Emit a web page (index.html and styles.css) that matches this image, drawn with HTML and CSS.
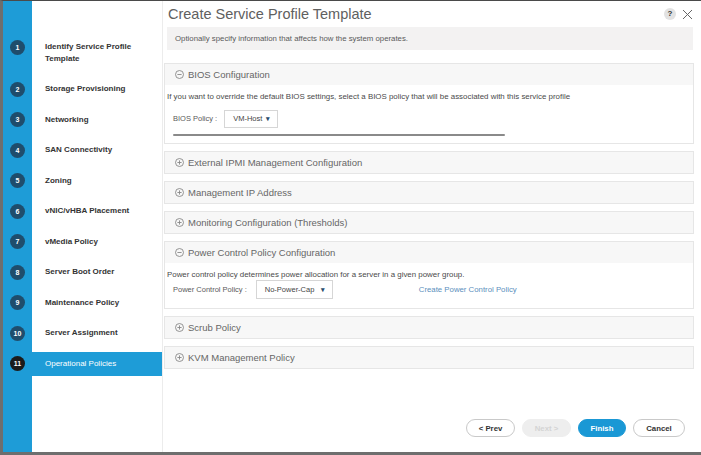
FILE: index.html
```html
<!DOCTYPE html>
<html lang="en">
<head>
  <meta charset="UTF-8">
  <title>Create Service Profile Template</title>
  <link rel="stylesheet" href="styles.css">
</head>
<body>
  <div class="steps">
    <div class="step"><span class="step-num"><i>1</i></span><span class="step-label">Identify Service Profile Template</span></div>
    <div class="step"><span class="step-num"><i>2</i></span><span class="step-label">Storage Provisioning</span></div>
    <div class="step"><span class="step-num"><i>3</i></span><span class="step-label">Networking</span></div>
    <div class="step"><span class="step-num"><i>4</i></span><span class="step-label">SAN Connectivity</span></div>
    <div class="step"><span class="step-num"><i>5</i></span><span class="step-label">Zoning</span></div>
    <div class="step"><span class="step-num"><i>6</i></span><span class="step-label">vNIC/vHBA Placement</span></div>
    <div class="step"><span class="step-num"><i>7</i></span><span class="step-label">vMedia Policy</span></div>
    <div class="step"><span class="step-num"><i>8</i></span><span class="step-label">Server Boot Order</span></div>
    <div class="step"><span class="step-num"><i>9</i></span><span class="step-label">Maintenance Policy</span></div>
    <div class="step"><span class="step-num"><i>10</i></span><span class="step-label">Server Assignment</span></div>
    <div class="step active"><span class="step-num"><i>11</i></span><span class="step-label">Operational Policies</span></div>
  </div>

  <div class="main">
    <div class="title-row">
      <h1>Create Service Profile Template</h1>
      <div class="title-icons">
        <span class="help">?</span>
        <svg class="close" width="11" height="11" viewBox="0 0 11 11"><path d="M1 1L10 10M10 1L1 10" stroke="#666" stroke-width="1" fill="none"/></svg>
      </div>
    </div>
    <div class="desc">Optionally specify information that affects how the system operates.</div>

    <div class="panel bios">
      <div class="panel-head"><svg class="toggle" width="9" height="9" viewBox="0 0 9 9"><circle cx="4.5" cy="4.5" r="4" stroke="#888" stroke-width="0.9" fill="none"/><path d="M2.4 4.5H6.6" stroke="#888" stroke-width="0.9"/></svg>BIOS Configuration</div>
      <div class="panel-body">
        <div class="note">If you want to override the default BIOS settings, select a BIOS policy that will be associated with this service profile</div>
        <div class="field">
          <span class="field-label">BIOS Policy :</span>
          <span class="select bios-select">VM-Host <b>&#9662;</b></span>
        </div>
        <div class="scroll-bar"></div>
      </div>
    </div>

    <div class="panel">
      <div class="panel-head"><svg class="toggle" width="9" height="9" viewBox="0 0 9 9"><circle cx="4.5" cy="4.5" r="4" stroke="#888" stroke-width="0.9" fill="none"/><path d="M2.4 4.5H6.6M4.5 2.4V6.6" stroke="#888" stroke-width="0.9"/></svg>External IPMI Management Configuration</div>
    </div>
    <div class="panel">
      <div class="panel-head"><svg class="toggle" width="9" height="9" viewBox="0 0 9 9"><circle cx="4.5" cy="4.5" r="4" stroke="#888" stroke-width="0.9" fill="none"/><path d="M2.4 4.5H6.6M4.5 2.4V6.6" stroke="#888" stroke-width="0.9"/></svg>Management IP Address</div>
    </div>
    <div class="panel">
      <div class="panel-head"><svg class="toggle" width="9" height="9" viewBox="0 0 9 9"><circle cx="4.5" cy="4.5" r="4" stroke="#888" stroke-width="0.9" fill="none"/><path d="M2.4 4.5H6.6M4.5 2.4V6.6" stroke="#888" stroke-width="0.9"/></svg>Monitoring Configuration (Thresholds)</div>
    </div>

    <div class="panel power">
      <div class="panel-head"><svg class="toggle" width="9" height="9" viewBox="0 0 9 9"><circle cx="4.5" cy="4.5" r="4" stroke="#888" stroke-width="0.9" fill="none"/><path d="M2.4 4.5H6.6" stroke="#888" stroke-width="0.9"/></svg>Power Control Policy Configuration</div>
      <div class="panel-body">
        <div class="note">Power control policy determines power allocation for a server in a given power group.</div>
        <div class="field">
          <span class="field-label">Power Control Policy :</span>
          <span class="select power-select">No-Power-Cap <b>&#9662;</b></span>
          <a class="link" href="#">Create Power Control Policy</a>
        </div>
      </div>
    </div>

    <div class="panel">
      <div class="panel-head"><svg class="toggle" width="9" height="9" viewBox="0 0 9 9"><circle cx="4.5" cy="4.5" r="4" stroke="#888" stroke-width="0.9" fill="none"/><path d="M2.4 4.5H6.6M4.5 2.4V6.6" stroke="#888" stroke-width="0.9"/></svg>Scrub Policy</div>
    </div>
    <div class="panel">
      <div class="panel-head"><svg class="toggle" width="9" height="9" viewBox="0 0 9 9"><circle cx="4.5" cy="4.5" r="4" stroke="#888" stroke-width="0.9" fill="none"/><path d="M2.4 4.5H6.6M4.5 2.4V6.6" stroke="#888" stroke-width="0.9"/></svg>KVM Management Policy</div>
    </div>

    <div class="footer">
      <button class="btn prev">&lt; Prev</button>
      <button class="btn next" disabled>Next &gt;</button>
      <button class="btn finish">Finish</button>
      <button class="btn cancel">Cancel</button>
    </div>
  </div>
</body>
</html>
```

FILE: styles.css
```css
html, body {
  margin: 0;
  height: 100%;
}
body {
  box-sizing: border-box;
  height: 455px;
  display: flex;
  font-family: "Liberation Sans", Arial, sans-serif;
  color: #333;
  background: #fff;
  border-top: 1px solid #4a4a4a;
  border-left: 3px solid #6e6e6e;
  border-bottom: 3px solid #6e6e6e;
}

/* wizard steps */
.steps {
  width: 159px;
  flex: none;
  padding-top: 34px;
  box-sizing: border-box;
  background: linear-gradient(to right, #1e9cd7 29px, #fff 29px);
}
.step {
  display: flex;
  align-items: flex-start;
  margin-bottom: 6.5px;
}
.step-num {
  width: 29px;
  flex: none;
  display: flex;
  justify-content: center;
}
.step-num i {
  width: 15px;
  height: 15px;
  margin-top: 4.5px;
  border-radius: 50%;
  background: #1f4d6c;
  color: #fff;
  font-style: normal;
  font-weight: bold;
  font-size: 7px;
  line-height: 15px;
  text-align: center;
}
.step-label {
  flex: 1;
  padding: 6.25px 8px 6.25px 13px;
  font-size: 8px;
  font-weight: bold;
  line-height: 11.5px;
  color: #333;
}
.step.active .step-label {
  background: #1e9cd7;
  color: #fff;
  font-weight: normal;
}
.step.active .step-num i {
  background: #1b1b1b;
}

/* main area */
.main {
  flex: 1;
  display: flex;
  flex-direction: column;
  border-left: 1px solid #ececec;
  padding: 0 7px 0 1px;
}
.title-row {
  height: 26px;
  display: flex;
  align-items: center;
  justify-content: space-between;
  margin-left: 4px;
}
h1 {
  margin: 0;
  font-size: 14.5px;
  font-weight: normal;
  color: #606060;
}
.title-icons {
  display: flex;
  align-items: center;
  gap: 6px;
  margin-right: 1px;
}
.help {
  width: 12px;
  height: 12px;
  border-radius: 50%;
  background: #e2e2e2;
  font-size: 8px;
  font-weight: bold;
  line-height: 12px;
  text-align: center;
  color: #333;
}
.desc {
  height: 23px;
  margin: 0 1px 0 3px;
  padding-left: 8px;
  background: #f3f2f2;
  font-size: 7.8px;
  line-height: 23px;
  color: #5a5a5a;
}

.panel {
  border: 1px solid #e6e6e6;
  margin-bottom: 7px;
}
.panel.bios {
  margin-top: 13px;
}
.panel-head {
  height: 21px;
  display: flex;
  align-items: center;
  padding-left: 10px;
  background: #f7f7f7;
  font-size: 9.5px;
  color: #666;
}
.toggle {
  margin-right: 4px;
}
.panel-body {
  padding-left: 2px;
}
.note {
  margin-top: 7px;
  font-size: 7.9px;
  line-height: 10px;
  color: #4a4a4a;
  white-space: nowrap;
}
.field {
  display: flex;
  align-items: center;
  padding-left: 6px;
  font-size: 7.5px;
  color: #5a5a5a;
}
.bios .field {
  margin-top: 7.5px;
}
.power .panel-body {
  padding-bottom: 9px;
}
.field-label {
  margin-right: 7px;
}
.select {
  height: 18px;
  box-sizing: border-box;
  display: flex;
  align-items: center;
  justify-content: space-between;
  padding: 0 7px 0 8px;
  border: 1px solid #d6d6d6;
  background: #fff;
  color: #444;
}
.select b {
  font-size: 7px;
  color: #2a4d6e;
}
.bios-select {
  width: 54px;
}
.power-select {
  width: 77px;
  height: 19px;
  margin-left: 2px;
}
.link {
  margin-left: 86px;
  color: #5b8fbd;
  text-decoration: none;
  font-size: 7.8px;
}
.scroll-bar {
  width: 332px;
  height: 2px;
  margin: 6px 0 7.5px 6px;
  background: #8a8a8a;
  border-radius: 1px;
}

/* wizard buttons */
.footer {
  margin-top: auto;
  display: flex;
  justify-content: flex-end;
  gap: 7px;
  padding: 0 9px 15px 0;
}
.btn {
  height: 18px;
  padding: 0;
  border: 1px solid #c9c9c9;
  border-radius: 9px;
  background: #fff;
  font-family: "Liberation Sans", Arial, sans-serif;
  font-size: 7.8px;
  font-weight: bold;
  color: #333;
}
.prev { width: 49px; }
.next {
  width: 49px;
  background: #eeeeee;
  border-color: #eeeeee;
  color: #d4d4d4;
}
.finish {
  width: 48px;
  background: #1a98d5;
  border-color: #1a98d5;
  color: #fff;
}
.cancel { width: 52px; }
```
